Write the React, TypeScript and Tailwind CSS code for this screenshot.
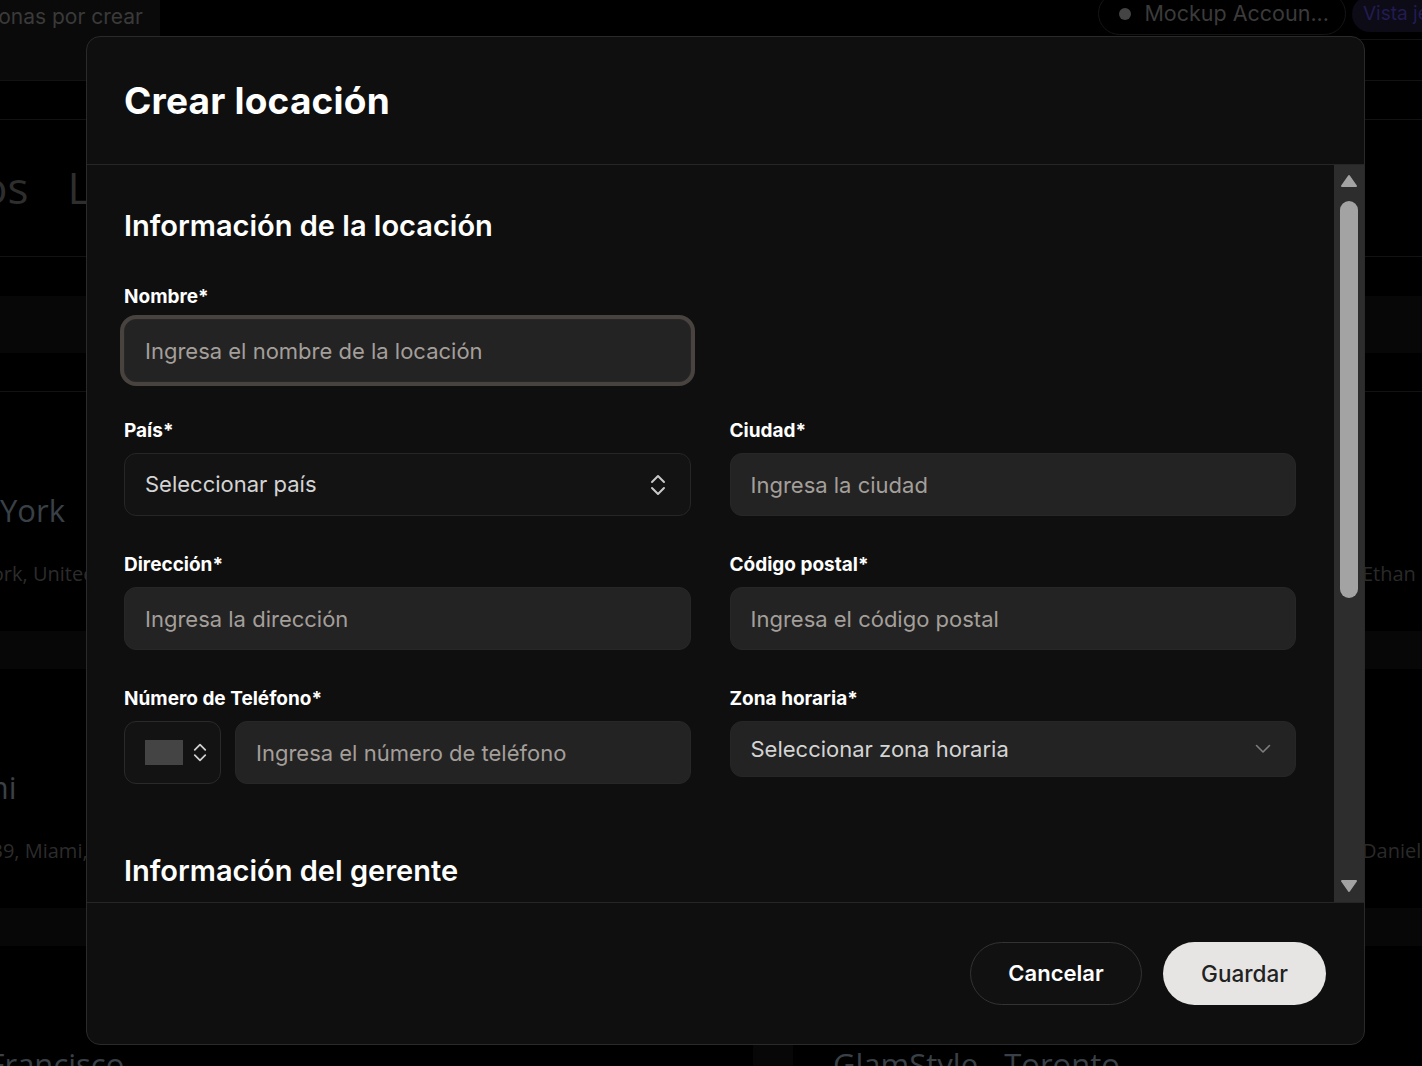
import type { ReactNode } from 'react'

// ── Página detrás del modal (atenuada) ───────────────────────────
function PageBehind() {
  return (
    <div className="flex h-full w-full flex-col bg-black font-['Open_Sans',sans-serif]">
      <div className="flex h-[40px] shrink-0 items-start border-b border-[#121212]">
        <div className="flex h-[81px] w-[160px] shrink-0 items-start overflow-hidden bg-[#0a0a0a]">
          <span className="-ml-[15px] mt-[1px] whitespace-nowrap font-['Inter',sans-serif] text-[21px] text-[#3a3a3a]">Zonas por crear</span>
        </div>
        <div className="flex-1" />
        <div className="-mt-[8px] flex h-[43px] items-center gap-[13px] rounded-full border border-[#151515] pl-[20px] pr-[16px] font-['Inter',sans-serif]">
          <span className="h-[12px] w-[12px] rounded-full bg-[#444]" />
          <span className="text-[21.5px] text-[#3b3b3b]">Mockup Accoun...</span>
        </div>
        <div className="-mt-[4px] ml-[6px] flex h-[36px] w-[70px] items-center overflow-hidden rounded-l-full bg-[#0c0b16] pl-[11px] font-['Inter',sans-serif]">
          <span className="whitespace-nowrap text-[19px] text-[#221c52]">Vista jefe</span>
        </div>
      </div>
      <div className="h-[41px] shrink-0 border-b border-[#121212]" />
      <div className="h-[39px] shrink-0 border-b border-[#121212]" />
      <div className="flex h-[137px] shrink-0 items-center gap-[39px] border-b border-[#121212]">
        <span className="-ml-[151px] mb-[2px] whitespace-nowrap text-[44px] text-[#2e2e2e]">Servicios</span>
        <span className="mb-[2px] whitespace-nowrap text-[44px] text-[#2e2e2e]">Locaciones</span>
      </div>
      <div className="h-[39px] shrink-0" />
      <div className="h-[57px] shrink-0 bg-[#070707]" />
      <div className="h-[39px] shrink-0 border-b border-[#121212]" />

      <div className="-ml-[284px] grid w-[2114px] grid-cols-2 gap-x-[40px] gap-y-[38px] bg-[#070707]">
        <LocationCard name="GlamStyle - New York" address="1350 Fifth Avenue, New York, United States" manager="Mia" />
        <LocationCard name="GlamStyle - Chicago" address="88 Wacker Dr, Chicago, United States" manager="Ethan" />
        <LocationCard name="GlamStyle - Miami" address="1200 Ocean Drive, FL 33139, Miami, United States" manager="Lucas" />
        <LocationCard name="GlamStyle - Austin" address="12 Congress Ave, Austin, United States" manager="Daniel" />
        <LocationCard name="GlamStyle - San Francisco" address="1 Market St, San Francisco, United States" manager="Sofía" />
        <LocationCard name="GlamStyle - Toronto" address="200 King St, Toronto, Canada" manager="Emma" />
      </div>
    </div>
  )
}

function LocationCard({ name, address, manager }: { name: string; address: string; manager: string }) {
  return (
    <div className="flex h-[239px] flex-col bg-black px-[40px] pt-[98px]">
      <span className="whitespace-nowrap text-[31px] leading-[40px] text-[#394047]">{name}</span>
      <div className="mt-[29px] flex text-[20px] text-[#2c2c2c]">
        <span className="w-[529px] shrink-0 whitespace-nowrap">{address}</span>
        <span className="text-[#2a2a2a]">{manager}</span>
      </div>
    </div>
  )
}

// ── Iconos ──────────────────────────────────────────────────────
function UpDown({ className }: { className?: string }) {
  return (
    <svg viewBox="0 0 16 24" fill="none" stroke="currentColor" strokeWidth="2" strokeLinecap="round" strokeLinejoin="round" className={className}>
      <path d="M2 9 L8 3 L14 9" />
      <path d="M2 15 L8 21 L14 15" />
    </svg>
  )
}

function Down({ className }: { className?: string }) {
  return (
    <svg viewBox="0 0 16 10" fill="none" stroke="currentColor" strokeWidth="1.6" strokeLinecap="round" strokeLinejoin="round" className={className}>
      <path d="M1.5 1.5 L8 8 L14.5 1.5" />
    </svg>
  )
}

// ── Campos del formulario ───────────────────────────────────────
function Field({ label, children }: { label: string; children: ReactNode }) {
  return (
    <div className="flex flex-col gap-[11px]">
      <span className="text-[19px] font-bold leading-[22px] text-white">{label}</span>
      {children}
    </div>
  )
}

const inputCls =
  'h-[63px] w-full rounded-xl border border-[#272727] bg-[#232323] px-[20px] text-[22px] text-[#e5e5e5] outline-none placeholder:text-[#a49f9a]'

function Scrollbar() {
  return (
    <div className="flex w-[30px] shrink-0 flex-col items-center bg-[#2d2d2d]">
      <div className="flex h-[32px] items-center justify-center">
        <svg width="18" height="14" viewBox="0 0 18 14">
          <path d="M9 2 L16 12 L2 12 Z" fill="#a3a3a3" stroke="#a3a3a3" strokeWidth="2" strokeLinejoin="round" />
        </svg>
      </div>
      <div className="mt-[4px] h-[397px] w-[18px] rounded-full bg-[#a3a3a3]" />
      <div className="flex-1" />
      <div className="flex h-[32px] items-center justify-center">
        <svg width="18" height="14" viewBox="0 0 18 14">
          <path d="M2 2 L16 2 L9 12 Z" fill="#a3a3a3" stroke="#a3a3a3" strokeWidth="2" strokeLinejoin="round" />
        </svg>
      </div>
    </div>
  )
}

function CreateLocationDialog() {
  return (
    <div className="flex h-[1009px] w-[1279px] flex-col overflow-hidden rounded-[14px] border border-[#2a2a2a] bg-[#0f0f0f] font-['Inter',sans-serif]">
      <header className="flex h-[128px] shrink-0 items-center border-b border-[#262626] px-[37px]">
        <h1 className="text-[37px] font-bold tracking-[0.2px] text-white">Crear locación</h1>
      </header>

      <div className="flex min-h-0 flex-1">
        <div className="flex-1 overflow-hidden pl-[37px] pr-[38px] pt-[44px]">
          <h2 className="text-[29px] font-semibold leading-[34px] text-white">Información de la locación</h2>

          <div className="mt-[43px] grid grid-cols-2 gap-x-[39px] gap-y-[38px]">
            <Field label="Nombre*">
              <input className={`${inputCls} ring-4 ring-[#48433f]`} placeholder="Ingresa el nombre de la locación" />
            </Field>
            <div />

            <Field label="País*">
              <button className="flex h-[63px] w-full items-center justify-between rounded-xl border border-[#262626] bg-[#131313] pl-[20px] pr-[24px] text-[22px] text-[#d4d4d4]">
                Seleccionar país
                <UpDown className="h-[24px] w-[16px] text-[#c9c9c9]" />
              </button>
            </Field>
            <Field label="Ciudad*">
              <input className={inputCls} placeholder="Ingresa la ciudad" />
            </Field>

            <Field label="Dirección*">
              <input className={inputCls} placeholder="Ingresa la dirección" />
            </Field>
            <Field label="Código postal*">
              <input className={inputCls} placeholder="Ingresa el código postal" />
            </Field>

            <Field label="Número de Teléfono*">
              <div className="flex gap-[14px]">
                <button className="flex h-[63px] w-[97px] shrink-0 items-center gap-[10px] rounded-xl border border-[#2a2a2a] bg-[#131313] pl-[20px]">
                  <span className="h-[25px] w-[38px] bg-[#444]" />
                  <UpDown className="h-[21px] w-[14px] text-[#d0d0d0]" />
                </button>
                <input className={inputCls} placeholder="Ingresa el número de teléfono" />
              </div>
            </Field>
            <Field label="Zona horaria*">
              <button className="flex h-[56px] w-full items-center justify-between rounded-xl border border-[#262626] bg-[#232323] pl-[20px] pr-[24px] text-[22px] text-[#d4d4d4]">
                Seleccionar zona horaria
                <Down className="h-[10px] w-[16px] text-[#7e7e7e]" />
              </button>
            </Field>
          </div>

          <h2 className="mt-[70px] text-[29px] font-semibold leading-[34px] text-white">Información del gerente</h2>
        </div>
        <Scrollbar />
      </div>

      <footer className="flex h-[142px] shrink-0 items-center justify-end gap-[21px] border-t border-[#262626] pr-[38px]">
        <button className="h-[63px] w-[172px] rounded-full border border-[#333] bg-[#111] text-[22px] font-semibold text-white">
          Cancelar
        </button>
        <button className="h-[63px] w-[163px] rounded-full bg-[#e6e5e3] text-[22.5px] font-medium text-[#222]">
          Guardar
        </button>
      </footer>
    </div>
  )
}

export default function App() {
  return (
    <div className="relative h-[1066px] w-full overflow-hidden bg-black">
      <PageBehind />
      <div className="absolute inset-0 flex items-start pl-[86px] pt-[36px]">
        <CreateLocationDialog />
      </div>
    </div>
  )
}
